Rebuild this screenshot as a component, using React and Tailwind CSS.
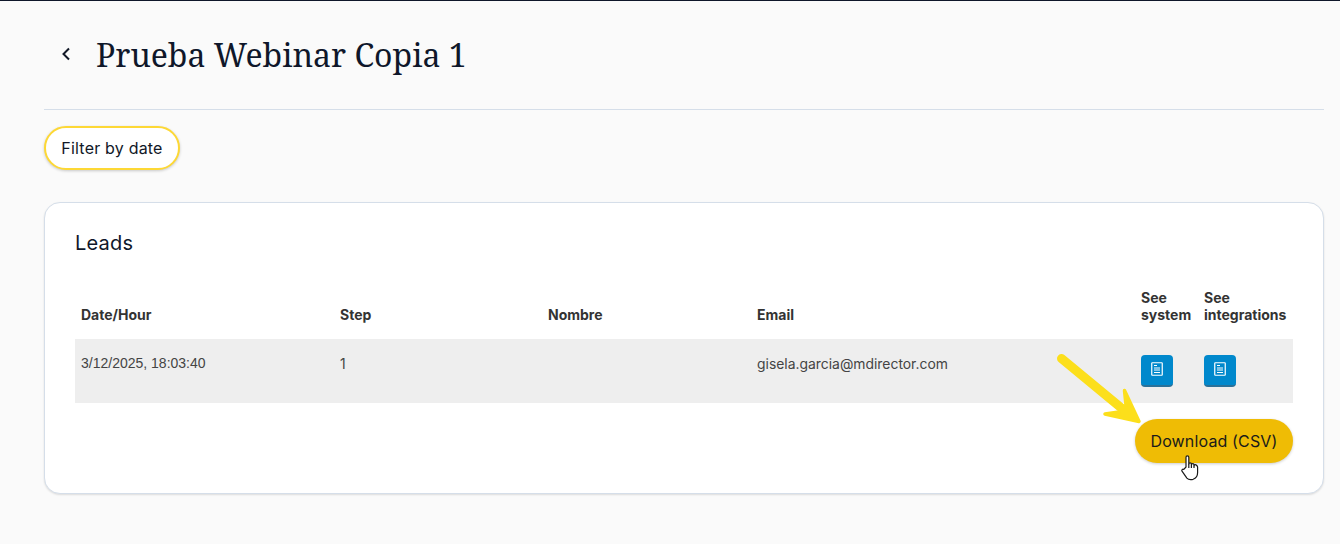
export default function App() {
  const Doc = () => (
    <span className="flex h-[32px] w-[32px] items-center justify-center rounded-[4px] border-b-2 border-[#2a7199] bg-[#0088cc]">
      <svg width="12" height="14" viewBox="0 0 12 14" fill="none" stroke="white" className="mt-[-3px]">
        <rect x="0.75" y="0.75" width="10.5" height="12.5" rx="0.5" strokeWidth="1.2" />
        <path d="M3 3.5h3M3 6h6M3 8h6M3 10.5h6" strokeWidth="1" />
      </svg>
    </span>
  );
  const th = "px-[6px] text-left align-bottom text-[14px] font-bold leading-[17px] text-[#333333] pb-[16px]";
  const td = "px-[6px] align-top pt-[16px] text-[13.9px] leading-[18px] text-[#444444]";
  return (
    <div className="relative h-[544px] w-[1340px] overflow-hidden border-t border-[#0f172a] bg-[#fafafa] font-['Inter',sans-serif]">
      <div className="flex h-[108px] items-center pl-[60px]">
        <svg width="12" height="14" viewBox="0 0 12 14" fill="none" stroke="#111827" strokeWidth="2" className="mr-[24px] mt-[-2px]">
          <path d="M9 1.5 3.5 7 9 12.5" />
        </svg>
        <h1 className="font-['Noto_Serif','DejaVu_Serif',serif] text-[32px] font-normal leading-[40px] text-[#0f172a]">Prueba Webinar Copia 1</h1>
      </div>
      <div className="mx-[44px] mr-[16px] border-t border-[#d5dee9]" />
      <div className="pl-[44px] pt-[16px]">
        <button className="h-[44px] w-[136px] rounded-full border-2 border-[#fdd835] bg-white text-[16px] font-normal tracking-[0.2px] text-[#111827] shadow-[0_1px_3px_rgba(0,0,0,0.2)]">Filter by date</button>
      </div>
      <section className="ml-[44px] mr-[16px] mt-[32px] h-[292px] rounded-[16px] border border-[#d5dee9] bg-white px-[30px] pt-[26px] shadow-[0_1px_2px_rgba(0,0,0,0.12)]">
        <h2 className="text-[20px] font-normal tracking-[0.2px] leading-[28px] text-[#0f172a]">Leads</h2>
        <table className="mt-[32px] w-[1218px] table-fixed border-collapse">
          <colgroup>
            <col className="w-[259px]" />
            <col className="w-[208px]" />
            <col className="w-[209px]" />
            <col className="w-[384px]" />
            <col className="w-[63px]" />
            <col className="w-[95px]" />
          </colgroup>
          <thead>
            <tr>
              <th className={th}>Date/Hour</th>
              <th className={th}>Step</th>
              <th className={th}>Nombre</th>
              <th className={th}>Email</th>
              <th className={th}>See<br />system</th>
              <th className={th}>See<br />integrations</th>
            </tr>
          </thead>
          <tbody>
            <tr className="h-[64px] bg-[#eeeeee]">
              <td className={td}><span className="block mt-[-1px] font-['Liberation_Sans',sans-serif] text-[14px]">3/12/2025, 18:03:40</span></td>
              <td className={td}>1</td>
              <td className={td}></td>
              <td className={td}>gisela.garcia@mdirector.com</td>
              <td className={td}><Doc /></td>
              <td className={td}><Doc /></td>
            </tr>
          </tbody>
        </table>
        <div className="mt-[16px] flex justify-end">
          <button className="h-[44px] w-[158px] rounded-full bg-[#efbc05] text-[16px] font-normal tracking-[0.15px] text-[#1a1a1a] shadow-[0_1px_3px_rgba(0,0,0,0.2)]">Download (CSV)</button>
        </div>
      </section>
      <svg className="absolute left-[1055px] top-[350px]" width="90" height="76" viewBox="0 0 90 76" fill="none" stroke="#fcdf1b" strokeLinecap="round" strokeLinejoin="round">
        <path d="M6.5 7.5 70 60" strokeWidth="9" />
        <path d="M69.5 39.5 84 70.5 50 63 64 61 71 54Z" fill="#fcdf1b" strokeWidth="3.5" />
      </svg>
      <svg className="absolute left-[1180px] top-[453px]" width="22" height="27" viewBox="0 0 22 27" fill="white" stroke="#1a1a1a" strokeWidth="1.2" strokeLinejoin="round">
        <path d="M6 13V3.2a1.4 1.4 0 0 1 2.8 0V10c0-1.6 2.6-1.6 2.6 0v.8c0-1.5 2.6-1.5 2.6 0v.9c0-1.4 2.6-1.4 2.6 0 0 0 1 .1 1 1.3v5.5c0 3.2-2 6-4.5 6.8-2.5.6-5 .2-6.2-1.2L2 17.2c-.8-1 .6-2.7 1.8-1.8z" />
        <path d="M8.8 10v4M11.4 10.8v3.2M14 11.7V14" fill="none" />
      </svg>
    </div>
  );
}
